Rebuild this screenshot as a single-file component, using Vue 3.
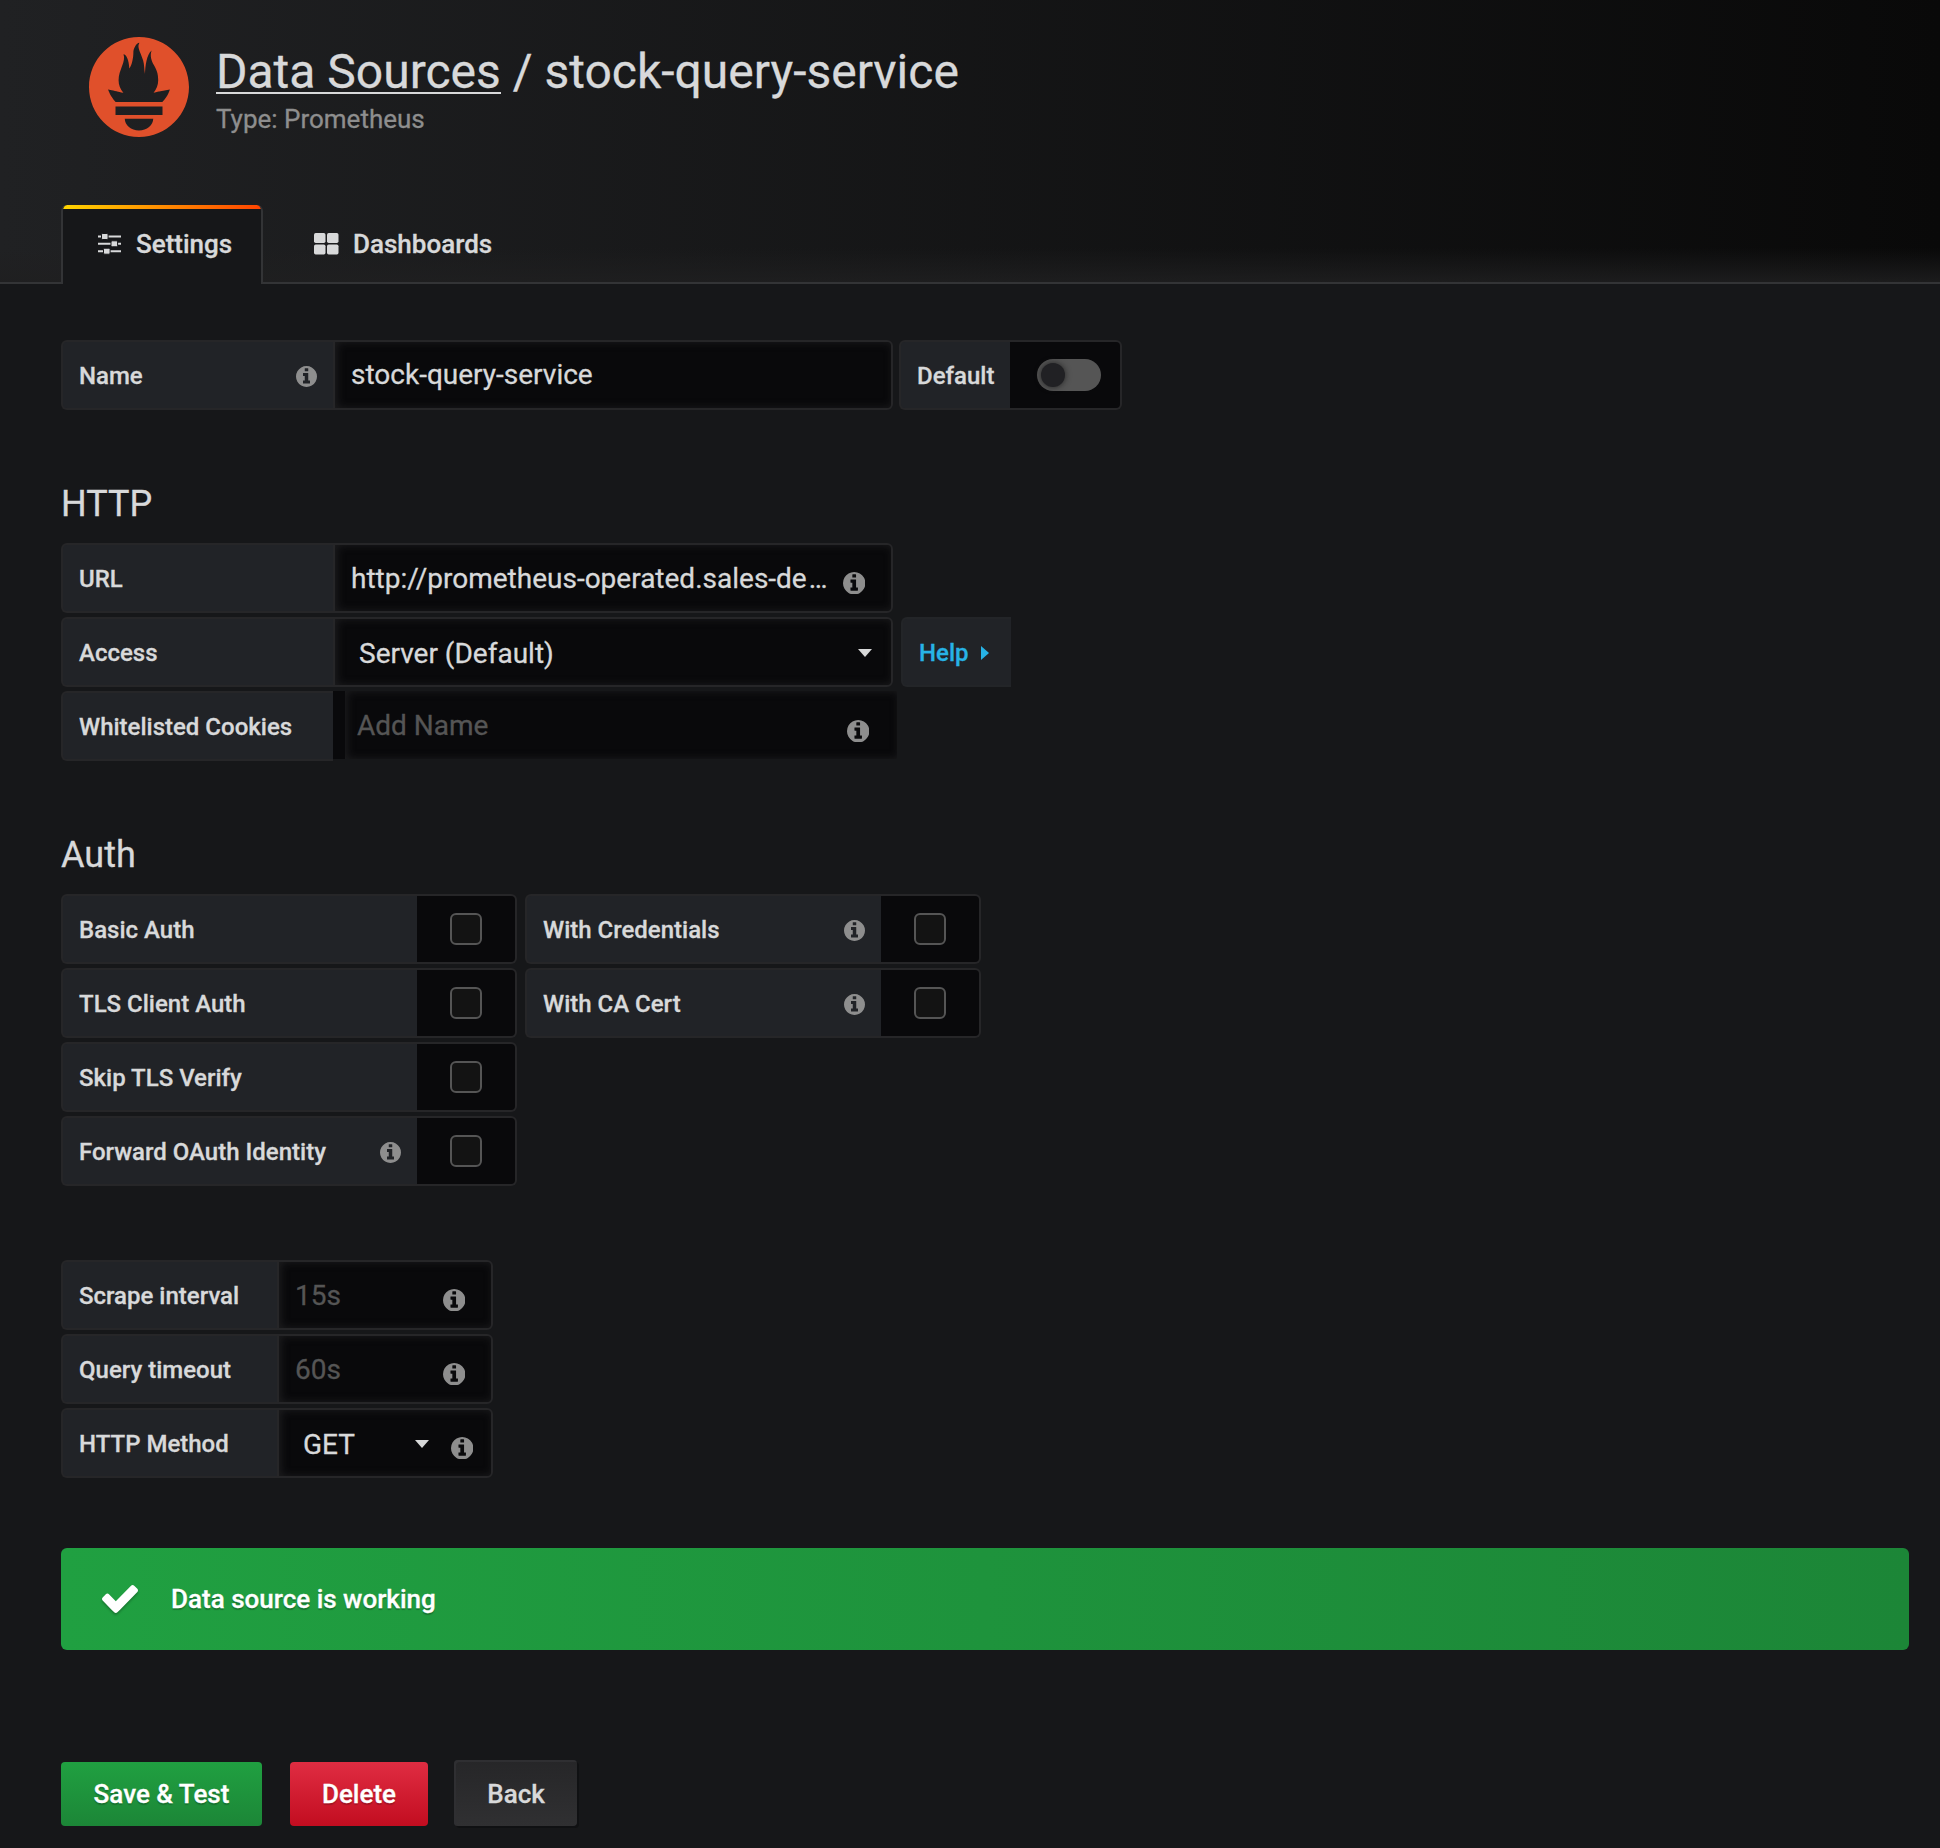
<script setup>
import { h } from 'vue'

const InfoIcon = (props) =>
  h('svg', { viewBox: '0 0 1536 1536', width: props.size, height: props.size, fill: '#8e8e8e' }, [
    h('path', {
      d: 'M1024 1248v-160q0-14-9-23t-23-9h-96V544q0-14-9-23t-23-9H544q-14 0-23 9t-9 23v160q0 14 9 23t23 9h96v320h-96q-14 0-23 9t-9 23v160q0 14 9 23t23 9h448q14 0 23-9t9-23zM896 352V192q0-14-9-23t-23-9H672q-14 0-23 9t-9 23v160q0 14 9 23t23 9h192q14 0 23-9t9-23zm640 416q0 209-103 385.500T1153.500 1433 768 1536t-385.500-103T103 1153.500 0 768t103-385.500T382.500 103 768 0t385.500 103T1433 382.500 1536 768z'
    })
  ])
InfoIcon.props = ['size']

const authLeft = [
  { label: 'Basic Auth' },
  { label: 'TLS Client Auth' },
  { label: 'Skip TLS Verify' },
  { label: 'Forward OAuth Identity', info: true }
]
const authRight = [
  { label: 'With Credentials', info: true },
  { label: 'With CA Cert', info: true }
]
</script>

<template>
  <div class="page">
    <header class="header">
      <div class="brand">
        <svg class="logo" viewBox="0 .667 113.333 113.333" width="100" height="100">
          <path fill="#e0502b" d="M56.667.667C25.372.667 0 26.036 0 57.332c0 31.295 25.372 56.666 56.667 56.666s56.666-25.371 56.666-56.666c0-31.296-25.372-56.665-56.666-56.665zm0 106.055c-8.904 0-16.123-5.948-16.123-13.283H72.790c0 7.334-7.219 13.283-16.123 13.283zM83.297 89.040H30.034v-9.658h53.264v9.658zm-.191-14.629h-52.920c-.176-.203-.356-.403-.526-.609-5.452-6.620-6.736-10.076-7.983-13.598-.021-.116 6.611 1.355 11.314 2.413 0 0 2.420.560 5.958 1.205-3.397-3.982-5.414-9.044-5.414-14.218 0-11.359 8.712-21.285 5.569-29.308 3.059.249 6.331 6.456 6.552 16.161 3.252-4.494 4.613-12.701 4.613-17.733 0-5.210 3.433-11.262 6.867-11.469-3.061 5.045.793 9.370 4.219 20.099 1.285 4.030 1.121 10.812 2.113 15.113.329-8.933 1.865-21.966 7.532-26.466-2.500 5.667.37 12.758 2.333 16.167 3.167 5.500 5.087 9.667 5.087 17.548 0 5.284-1.951 10.259-5.242 14.148 3.742-.702 6.326-1.335 6.326-1.335l12.152-2.371c.001-.001-1.765 7.261-8.550 14.253z" />
        </svg>
        <div class="titles">
          <h1><a>Data Sources</a> / stock-query-service</h1>
          <div class="subtitle">Type: Prometheus</div>
        </div>
      </div>
      <nav class="tabs">
        <div class="tab-gap"></div>
        <div class="tab active">
          <svg class="sliders" width="24" height="22" viewBox="0 0 24 22" fill="#d8d9da">
            <path d="M0 2.500h23v2H0zM0 9.800h23v2H0zM0 17.200h23v2H0z" />
            <g stroke="#161719" stroke-width="1">
              <rect x="3.500" y=".5" width="6.600" height="6" rx="1.200" />
              <rect x="13" y="7.800" width="6.600" height="6" rx="1.200" />
              <rect x="5.500" y="15.200" width="6.600" height="6" rx="1.200" />
            </g>
          </svg>
          <span>Settings</span>
        </div>
        <div class="tab">
          <svg class="grid" width="25" height="22" viewBox="0 0 25 22" fill="#d8d9da">
            <rect width="11.500" height="10" rx="1.700" /><rect x="13" width="11.500" height="10" rx="1.700" />
            <rect y="11.500" width="11.500" height="10" rx="1.700" /><rect x="13" y="11.500" width="11.500" height="10" rx="1.700" />
          </svg>
          <span>Dashboards</span>
        </div>
      </nav>
    </header>

    <main class="body">
      <div class="row">
        <div class="label wide">Name<InfoIcon :size="21" /></div>
        <div class="input long name">stock-query-service</div>
        <div class="label default">Default</div>
        <div class="cell toggle-cell"><div class="toggle"><i></i></div></div>
      </div>

      <h3>HTTP</h3>
      <div class="row">
        <div class="label wide">URL</div>
        <div class="input long"><span class="url">http://prometheus-operated.sales-de<span class="dots">…</span></span><InfoIcon class="hint" :size="22.4" /></div>
      </div>
      <div class="row">
        <div class="label wide">Access</div>
        <div class="input long select">Server (Default)<b class="caret"></b></div>
        <div class="label help">Help<b class="arrow"></b></div>
      </div>
      <div class="row">
        <div class="label wide">Whitelisted Cookies</div>
        <div class="tags"><div class="tag-input">Add Name<InfoIcon class="hint" :size="22.4" /></div></div>
      </div>

      <h3>Auth</h3>
      <div class="columns">
        <div v-for="(col, i) in [authLeft, authRight]" :key="i">
          <div v-for="item in col" :key="item.label" class="row">
            <div class="label check">{{ item.label }}<InfoIcon v-if="item.info" :size="21" /></div>
            <div class="cell"><div class="checkbox"></div></div>
          </div>
        </div>
      </div>

      <div class="group">
        <div class="row">
          <div class="label narrow">Scrape interval</div>
          <div class="input short muted">15s<InfoIcon class="hint" :size="22.4" /></div>
        </div>
        <div class="row">
          <div class="label narrow">Query timeout</div>
          <div class="input short muted">60s<InfoIcon class="hint" :size="22.4" /></div>
        </div>
        <div class="row">
          <div class="label narrow">HTTP Method</div>
          <div class="input short select method">GET<b class="caret"></b><InfoIcon class="hint" :size="22.4" /></div>
        </div>
      </div>

      <div class="alert">
        <svg width="36" height="28" viewBox="121 334 1550 1188" preserveAspectRatio="none" fill="#fff">
          <path d="M1671 566q0 40-28 68l-724 724-136 136q-28 28-68 28t-68-28l-136-136-362-362q-28-28-28-68t28-68l136-136q28-28 68-28t68 28l294 295 656-657q28-28 68-28t68 28l136 136q28 28 28 68z" />
        </svg>
        <span>Data source is working</span>
      </div>

      <div class="buttons">
        <button class="save">Save &amp; Test</button>
        <button class="delete">Delete</button>
        <button class="back">Back</button>
      </div>
    </main>
  </div>
</template>

<style>
body {
  background: #161719;
}
</style>

<style scoped>
* {
  box-sizing: border-box;
}
.page {
  width: 1940px;
  height: 1848px;
  overflow: hidden;
  background: #161719;
  color: #d8d9da;
  font-family: Roboto, "Liberation Sans", sans-serif;
  font-size: 28px;
  -webkit-text-stroke: 0.3px;
}
.header {
  height: 284px;
  display: flex;
  flex-direction: column;
  justify-content: space-between;
  background:
    linear-gradient(to top, rgba(31, 31, 32, 0.85) 2px, rgba(31, 31, 32, 0) 36px),
    linear-gradient(90deg, #202123, #090909);
}
.brand {
  display: flex;
  padding: 37px 0 0 89px;
}
.titles {
  margin-left: 27px;
}
h1 {
  margin: 7px 0 0;
  font-size: 48px;
  line-height: 56px;
  font-weight: 400;
  white-space: nowrap;
}
h1 a {
  border-bottom: 2px solid #d8d9da;
  display: inline-block;
  height: 50px;
}
.subtitle {
  font-size: 26px;
  line-height: 30px;
  margin-top: 4px;
  color: #8e8e8e;
}
.tabs {
  display: flex;
  height: 79px;
}
.tab-gap {
  width: 61px;
  border-bottom: 2px solid #333436;
}
.tab {
  display: flex;
  align-items: center;
  font-size: 26px;
  font-weight: 500;
  flex: 1;
  padding: 1px 0 0 51px;
  border-bottom: 2px solid #333436;
}
.tab.active {
  flex: none;
  width: 202px;
  padding: 0 0 1px 35px;
  background: linear-gradient(to right, #ffd500, #ff4400) 0 0 / 100% 4px no-repeat, #161719;
  border: 2px solid #333436;
  border-width: 0 2px;
  border-radius: 6px 6px 0 0;
}
.sliders {
  margin-right: 14px;
}
.grid {
  margin-right: 14px;
}
.body {
  padding: 56px 31px 0 61px;
}
.row {
  display: flex;
  height: 70px;
  margin-bottom: 4px;
}
.label {
  display: flex;
  align-items: center;
  justify-content: space-between;
  padding: 2px 16px 0;
  background: #212327;
  border: 2px solid #262628;
  border-right: 0;
  border-radius: 6px 0 0 6px;
  font-size: 24px;
  font-weight: 500;
}
.wide {
  width: 272px;
}
.check {
  width: 356px;
}
.narrow {
  width: 216px;
}
.default {
  width: 111px;
  margin-left: 6px;
}
.help {
  width: 110px;
  margin-left: 8px;
  color: #27b3e6;
  border-color: #232528;
  padding-right: 22px;
}
.arrow {
  border: 7px solid transparent;
  border-left: 8px solid #27b3e6;
  border-right: 0;
}
.input {
  display: flex;
  align-items: center;
  padding: 0 16px;
  background: #09090b;
  border: 2px solid #262628;
  border-radius: 0 6px 6px 0;
  box-shadow: inset 2px 0 8px rgba(38, 38, 40, 0.7);
}
.name {
  padding-bottom: 2px;
}
.long {
  width: 560px;
}
.short {
  width: 216px;
}
.select {
  padding-top: 2px;
  padding-left: 24px;
}
.muted {
  color: #555;
}
.url {
  white-space: nowrap;
}
.dots {
  margin-left: 2px;
}
.hint {
  margin-left: auto;
  position: relative;
  top: 5px;
  right: 10px;
}
.method .hint {
  top: 4px;
  right: 2px;
  margin-left: 21px;
}
.caret {
  margin-left: auto;
  border: 7px solid transparent;
  border-top: 8px solid #d8d9da;
  border-bottom: 0;
  position: relative;
  right: 3px;
}
.tags {
  width: 564px;
  height: 68px;
  padding-left: 12px;
  background: #09090b;
}
.tag-input {
  display: flex;
  align-items: center;
  height: 68px;
  padding: 0 18px 0 12px;
  color: #555;
  box-shadow: inset 2px 0 8px rgba(38, 38, 40, 0.7);
}
.tag-input .hint {
  top: 6px;
}
.cell {
  width: 100px;
  display: flex;
  align-items: center;
  justify-content: center;
  background: #09090b;
  border: 2px solid #262628;
  border-left: 0;
  border-radius: 0 6px 6px 0;
}
.checkbox {
  width: 32px;
  height: 32px;
  background: #131313;
  border: 2px solid #555;
  border-radius: 6px;
}
.toggle-cell {
  width: 112px;
  padding-left: 8px;
}
.toggle {
  width: 64px;
  height: 32px;
  border-radius: 16px;
  background: #555;
  padding: 4px;
}
.toggle i {
  display: block;
  width: 24px;
  height: 24px;
  border-radius: 50%;
  background: #212124;
  box-shadow: 0 0 6px #222;
}
h3 {
  margin: 73px 0 18px;
  font-size: 36px;
  line-height: 42px;
  font-weight: 400;
}
.columns {
  display: flex;
  gap: 8px;
}
.group {
  margin-top: 70px;
}
.alert {
  margin-top: 70px;
  height: 102px;
  display: flex;
  align-items: center;
  padding-left: 41px;
  gap: 33px;
  border-radius: 6px;
  background: linear-gradient(90deg, #20a041, #1c8637);
  color: #fff;
  font-size: 26px;
  font-weight: 500;
  text-shadow: 0 2px 1px rgba(0, 0, 0, 0.25);
}
.alert svg {
  filter: drop-shadow(0 2px 1px rgba(0, 0, 0, 0.25));
}
.buttons {
  display: flex;
  margin-top: 112px;
  align-items: flex-end;
  height: 64px;
}
button {
  height: 64px;
  padding: 0;
  border: 0;
  border-radius: 4px;
  color: #fff;
  font: 500 26px/64px Roboto, sans-serif;
  -webkit-text-stroke: 0.3px;
}
.save {
  width: 201px;
  background: linear-gradient(#20a041, #1c8637);
  text-shadow: 0 2px 1px rgba(0, 0, 0, 0.2);
}
.delete {
  width: 138px;
  margin: 0 26px 0 28px;
  background: linear-gradient(#e02d42, #c20d20);
  text-shadow: 0 2px 1px rgba(0, 0, 0, 0.2);
}
.back {
  width: 123px;
  height: 66px;
  padding: 2px 0 0 1px;
  color: #d8d9da;
  background: linear-gradient(#262628, #303032);
  box-shadow: inset 2px 2px 0 #2f2f32, 2px 2px 0 #101113;
}
</style>
